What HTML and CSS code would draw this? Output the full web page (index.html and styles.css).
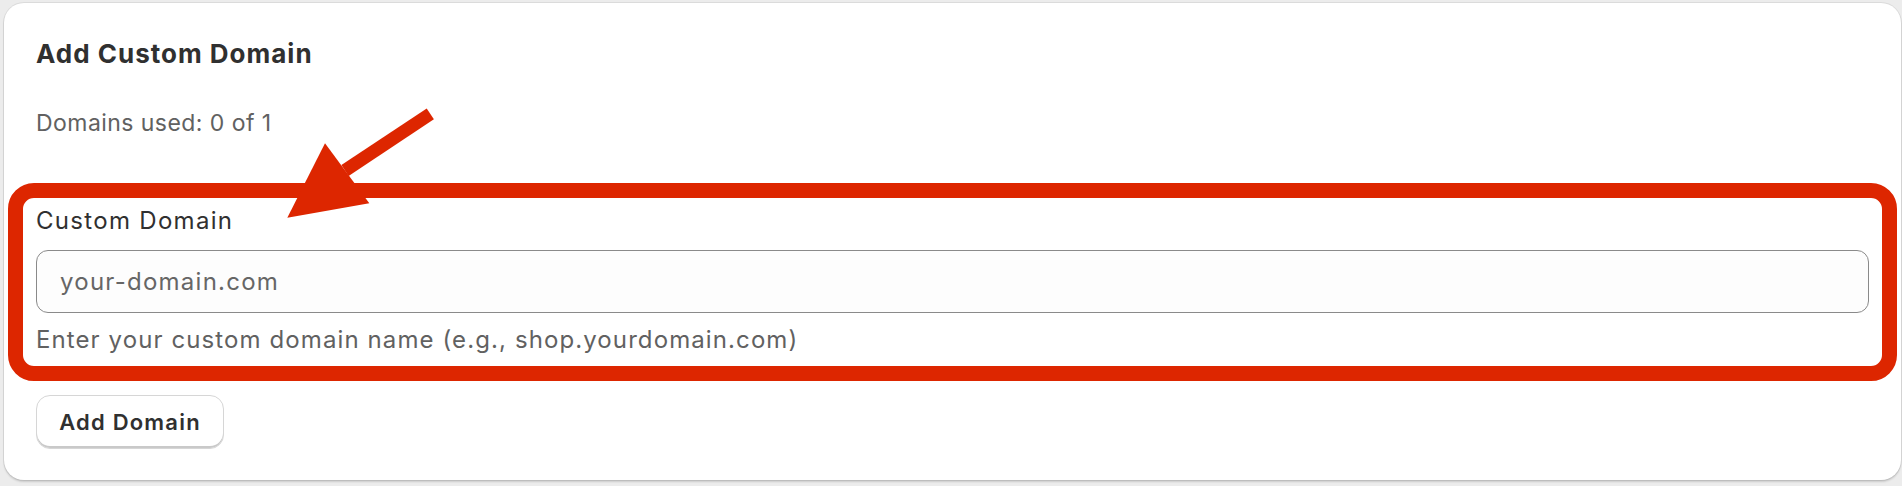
FILE: index.html
```html
<!DOCTYPE html>
<html lang="en">
<head>
<meta charset="utf-8">
<title>Add Custom Domain</title>
<link rel="stylesheet" href="styles.css">
</head>
<body>
<div class="page">
  <section class="card">
    <h2 class="card-title">Add Custom Domain</h2>
    <p class="usage">Domains used: 0 of 1</p>
    <div class="field">
      <label class="field-label" for="domain">Custom Domain</label>
      <input class="field-input" id="domain" type="text" placeholder="your-domain.com">
      <p class="field-help">Enter your custom domain name (e.g., shop.yourdomain.com)</p>
      <div class="highlight"></div>
    </div>
    <button class="btn" type="button">Add Domain</button>
    <svg class="arrow" width="200" height="140" viewBox="270 90 200 140" aria-hidden="true">
      <line x1="430.3" y1="113.8" x2="345" y2="170.5" stroke="#dd2600" stroke-width="13"/>
      <polygon points="287.3,217.7 325,143.3 369.3,203.3" fill="#dd2600"/>
    </svg>
  </section>
</div>
</body>
</html>
```

FILE: styles.css
```css
* { box-sizing: border-box; }

html, body {
  margin: 0;
  padding: 0;
  background: #ececec;
  font-family: Inter, "Noto Sans", "Liberation Sans", sans-serif;
}

.page {
  padding: 3px 1px 6px 4px;
}

.card {
  position: relative;
  background: #ffffff;
  border-radius: 20px;
  box-shadow: 0 0 0 1px rgba(0, 0, 0, 0.07), 0 2px 2px rgba(0, 0, 0, 0.14);
  padding: 33px 32px 31px 32px;
  height: 477px;
}

.card-title {
  margin: 0;
  font-size: 26px;
  line-height: 36px;
  font-weight: 650;
  letter-spacing: 1px;
  color: #303030;
}

.usage {
  margin: 35px 0 0 0;
  font-size: 23px;
  line-height: 32px;
  letter-spacing: 0.45px;
  color: #616161;
}

.field {
  position: relative;
  margin-top: 66px;
  display: flex;
  flex-direction: column;
}

.field-label {
  font-size: 24px;
  line-height: 32px;
  letter-spacing: 1.3px;
  color: #303030;
}

.field-input {
  margin-top: 13px;
  height: 63px;
  width: 100%;
  border: 1px solid #8a8a8a;
  border-radius: 12px;
  background: #fdfdfd;
  padding: 0 23px;
  font-family: inherit;
  font-size: 24px;
  letter-spacing: 1.25px;
  color: #303030;
  outline: none;
}

.field-input::placeholder {
  color: #666666;
}

.field-help {
  margin: 11px 0 0 0;
  font-size: 24px;
  line-height: 32px;
  letter-spacing: 1.1px;
  color: #616161;
}

.highlight {
  position: absolute;
  left: -28px;
  right: -28px;
  top: -22px;
  bottom: -25px;
  border: 15px solid #dd2600;
  border-radius: 26px;
  pointer-events: none;
}

.btn {
  margin-top: 39px;
  height: 54px;
  width: 188px;
  border: 1px solid #d6d6d6;
  border-radius: 14px;
  background: #ffffff;
  box-shadow: inset 0 -2px 0 #c9c9c9;
  font-family: inherit;
  font-size: 22px;
  font-weight: 600;
  letter-spacing: 1.2px;
  color: #303030;
  padding: 0;
}

.arrow {
  position: absolute;
  left: 266px;
  top: 87px;
}
```
